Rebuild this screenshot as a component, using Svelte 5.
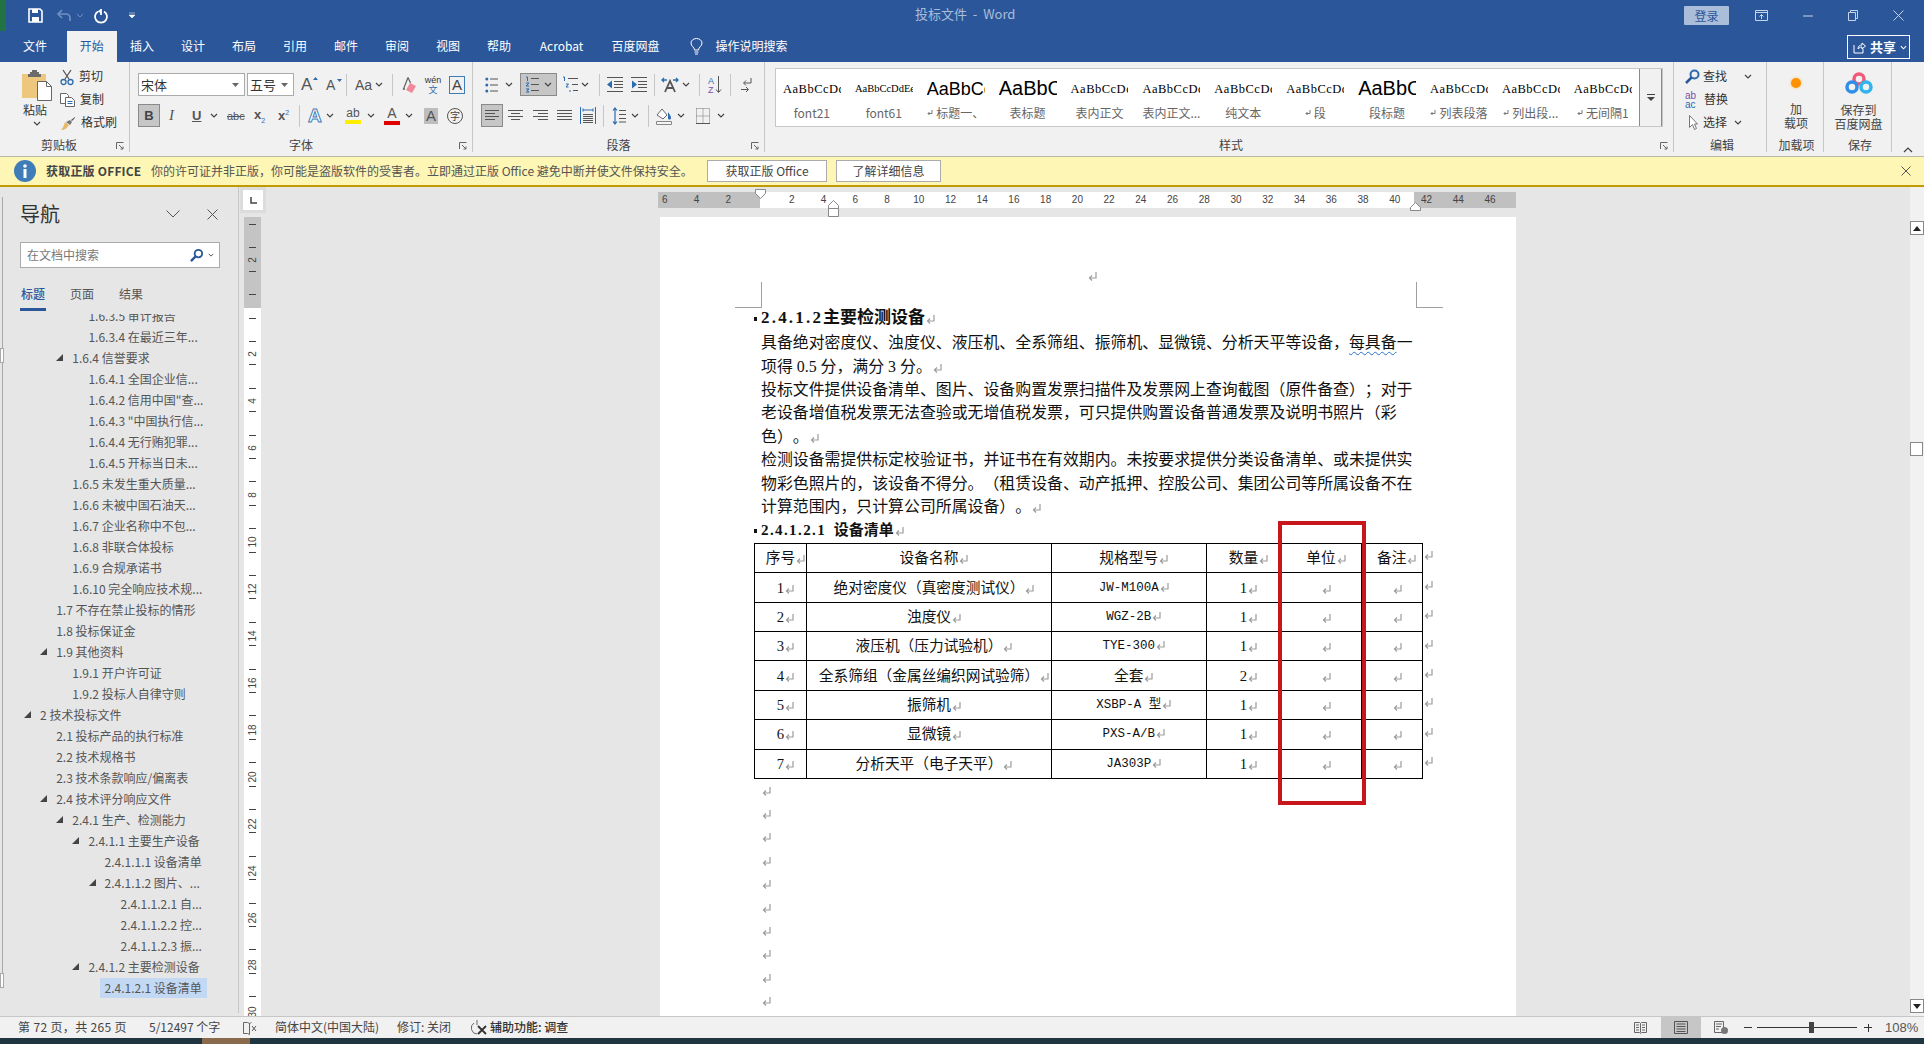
<script>
  const rows = [
    [4, 0, '1.6.3.5 审计报告'], [4, 0, '1.6.3.4 在最近三年...'], [3, 1, '1.6.4 信誉要求'],
    [4, 0, '1.6.4.1 全国企业信...'], [4, 0, '1.6.4.2 信用中国"查...'], [4, 0, '1.6.4.3 "中国执行信...'],
    [4, 0, '1.6.4.4 无行贿犯罪...'], [4, 0, '1.6.4.5 开标当日未...'], [3, 0, '1.6.5 未发生重大质量...'],
    [3, 0, '1.6.6 未被中国石油天...'], [3, 0, '1.6.7 企业名称中不包...'], [3, 0, '1.6.8 非联合体投标'],
    [3, 0, '1.6.9 合规承诺书'], [3, 0, '1.6.10 完全响应技术规...'], [2, 0, '1.7 不存在禁止投标的情形'],
    [2, 0, '1.8 投标保证金'], [2, 1, '1.9 其他资料'], [3, 0, '1.9.1 开户许可证'], [3, 0, '1.9.2 投标人自律守则'],
    [1, 1, '2 技术投标文件'], [2, 0, '2.1 投标产品的执行标准'], [2, 0, '2.2 技术规格书'],
    [2, 0, '2.3 技术条款响应/偏离表'], [2, 1, '2.4 技术评分响应文件'], [3, 1, '2.4.1 生产、检测能力'],
    [4, 1, '2.4.1.1 主要生产设备'], [5, 0, '2.4.1.1.1 设备清单'], [5, 1, '2.4.1.1.2 图片、...'],
    [6, 0, '2.4.1.1.2.1 自...'], [6, 0, '2.4.1.1.2.2 控...'], [6, 0, '2.4.1.1.2.3 振...'],
    [4, 1, '2.4.1.2 主要检测设备'], [5, 0, '2.4.1.2.1 设备清单']
  ];
  const styles = [
    ['AaBbCcDdEe', 'serif', 'font21', 0], ['AaBbCcDdEe', 'tiny', 'font61', 0], ['AaBbCcDd', 'big', '标题一、', 1],
    ['AaBbC', 'huge', '表标题', 0], ['AaBbCcDdEe', 'serif', '表内正文', 0], ['AaBbCcDdEe', 'serif', '表内正文...', 0],
    ['AaBbCcDdEe', 'serif', '纯文本', 0], ['AaBbCcDdEe', 'serif', '段', 1], ['AaBbC', 'huge', '段标题', 0],
    ['AaBbCcDdEe', 'serif', '列表段落', 1], ['AaBbCcDd', 'serif', '列出段...', 1], ['AaBbCcDd', 'serif', '无间隔1', 1]
  ];
  const table = [
    ['序号', '设备名称', '规格型号', '数量', '单位', '备注'],
    ['1', '绝对密度仪（真密度测试仪）', 'JW-M100A', '1', '', ''],
    ['2', '浊度仪', 'WGZ-2B', '1', '', ''],
    ['3', '液压机（压力试验机）', 'TYE-300', '1', '', ''],
    ['4', '全系筛组（金属丝编织网试验筛）', '全套', '2', '', ''],
    ['5', '振筛机', 'XSBP-A 型', '1', '', ''],
    ['6', '显微镜', 'PXS-A/B', '1', '', ''],
    ['7', '分析天平（电子天平）', 'JA303P', '1', '', '']
  ];
  const hnums = [6, 4, 2].map((n) => ({ n, x: 760 - 658 - n * 15.87 })).concat(
    Array.from({ length: 23 }, (_, i) => ({ n: (i + 1) * 2, x: 760 - 658 + (i + 1) * 2 * 15.87 }))
  );
  const vlabels = [{ n: 2, y: 260 }].concat(Array.from({ length: 15 }, (_, i) => ({ n: (i + 1) * 2, y: 354 + i * 47 })));
  const vticks = Array.from({ length: 34 }, (_, i) => 224 + i * 23.4);
  const marks = Array.from({ length: 10 }, (_, i) => i);
</script>

{#snippet ret()}
  <svg class="ret" width="9" height="10" viewBox="0 0 9 10"><path d="M8 1v6H1.500M4 4.500 1.500 7 4 9.500" fill="none" stroke="#9c9c9c" stroke-width="1.200"/></svg>
{/snippet}
{#snippet chev()}
  <svg class="chev" width="8" height="5" viewBox="0 0 8 5"><path d="M1 1l3 3 3-3" fill="none" stroke="#444" stroke-width="1.2"/></svg>
{/snippet}
{#snippet launcher()}
  <svg class="launch" width="8" height="8" viewBox="0 0 8 8"><path d="M.5 7V.5H7.5M3 3l4 4M4.5 7H7V4.5" fill="none" stroke="#666"/></svg>
{/snippet}

<div class="app">
  <div class="titlebar">
    <svg class="m28" width="15" height="15" viewBox="0 0 15 15"><path d="M1 1h11l2 2v11H1z" fill="none" stroke="#fff" stroke-width="1.6"/><path d="M4 1h6v4H4zM4 9h7v5H4z" fill="#fff"/></svg>
    <svg class="m14" width="15" height="14" viewBox="0 0 15 14"><path d="M5 1 1 5l4 4M1 5h8a4 4 0 0 1 4 4v3" fill="none" stroke="#6f8fbe" stroke-width="1.7"/></svg>
    <svg class="m4" width="8" height="5" viewBox="0 0 8 5"><path d="M1 1l3 3 3-3" fill="none" stroke="#6f8fbe"/></svg>
    <svg class="m10" width="14" height="15" viewBox="0 0 14 15"><path d="M4 3.500a6 6 0 1 0 6 0M7 1v6" fill="none" stroke="#fff" stroke-width="1.800"/><path d="M7 1 3.500 3.500 7 5z" fill="#fff"/></svg>
    <svg class="m21" width="6" height="7" viewBox="0 0 6 7"><path d="M0 1h6M0 3h6l-3 3z" fill="#fff" stroke="#fff" stroke-width=".5"/></svg>
    <div class="doc-title">投标文件  -  Word</div>
    <div class="signin">登录</div>
    <svg class="winb first" width="13" height="11" viewBox="0 0 13 11"><path d="M.5.5h12v10H.5zM.5 2.500h12M6.500 9V4.500M4.500 6.500l2-2 2 2" fill="none" stroke="#c6d4e8"/></svg>
    <svg class="winb" width="10" height="2" viewBox="0 0 10 2"><path d="M0 1h10" stroke="#c6d4e8"/></svg>
    <svg class="winb" width="10" height="11" viewBox="0 0 10 11"><path d="M.5 2.500h7v8h-7zM2.500 2.500v-2h7v8h-2" fill="none" stroke="#c6d4e8"/></svg>
    <svg class="winb" width="11" height="11" viewBox="0 0 11 11"><path d="M.5.5l10 10M10.500.5l-10 10" stroke="#c6d4e8"/></svg>
  </div>
  <div class="greenbar"></div>

  <div class="tabs">
    <div class="tab t-file">文件</div>
    <div class="tab active">开始</div>
    <div class="tab">插入</div><div class="tab">设计</div><div class="tab">布局</div><div class="tab">引用</div>
    <div class="tab">邮件</div><div class="tab">审阅</div><div class="tab">视图</div><div class="tab">帮助</div>
    <div class="tab t-wide">Acrobat</div><div class="tab t-wide">百度网盘</div>
    <svg class="bulb" width="13" height="17" viewBox="0 0 13 17"><path d="M4.500 12c0-3-3.500-3.500-3.500-7a5.500 4.500 0 0 1 11 0c0 3.500-3.500 4-3.500 7zM4.500 14h4M5 16h3" fill="none" stroke="#fff"/></svg>
    <div class="tab t-search">操作说明搜索</div>
    <div class="share">
      <svg width="13" height="13" viewBox="0 0 13 13"><path d="M1 4v8h9V8M5 8c0-3 2-4 4-4V2l3.500 3L9 8V6C7 6 6 7 5 8z" fill="none" stroke="#fff"/></svg>
      <b>共享</b>
      <svg width="7" height="5" viewBox="0 0 8 5"><path d="M1 1l3 3 3-3" fill="none" stroke="#fff" stroke-width="1.2"/></svg>
    </div>
  </div>

  <div class="ribbon">
    <section class="grp g-clip">
      <div class="clip-body">
        <div class="paste">
          <svg width="30" height="31" viewBox="0 0 30 31"><path d="M0 4h24v24H0z" fill="#eec77f"/><path d="M8 4V2h2V0h5v2h2v2h2v3H6V4z" fill="#6b6b6b"/><path d="M15.500 11.500h9l5 5v14h-14z" fill="#fff" stroke="#666"/><path d="M24.500 11.500v5h5" fill="none" stroke="#666"/></svg>
          <span class="pl">粘贴</span>
          {@render chev()}
        </div>
        <div class="clip-list">
          <div class="ci"><svg width="14" height="16" viewBox="0 0 14 16"><path d="M3 1l6 9M11 1l-6 9" stroke="#555" stroke-width="1.3"/><circle cx="3.500" cy="13" r="2.500" fill="none" stroke="#2b6cb0" stroke-width="1.300"/><circle cx="10.500" cy="13" r="2.500" fill="none" stroke="#2b6cb0" stroke-width="1.300"/></svg><span>剪切</span></div>
          <div class="ci"><svg width="15" height="14" viewBox="0 0 15 14"><path d="M.500.500h6l2 2v8h-8z" fill="#fff" stroke="#666"/><path d="M5.500 4.500h6l3 3v6h-9z" fill="#fff" stroke="#666"/><path d="M7.500 8.500h5M7.500 10.500h5" stroke="#2b6cb0"/></svg><span>复制</span></div>
          <div class="ci"><svg width="16" height="15" viewBox="0 0 16 15"><path d="M15 1l-4 3 1 1 3-3z" fill="#555"/><path d="M10 4l2 2-2 3-4-3z" fill="#777"/><path d="M5 6l4 3c-2 3-4 5-8 5 2-2 3-5 4-8z" fill="#e8b868"/></svg><span>格式刷</span></div>
        </div>
      </div>
      <div class="glabel">剪贴板</div>
      {@render launcher()}
    </section>

    <section class="grp g-font">
      <div class="rrow">
        <div class="combo fname">宋体<svg width="7" height="4" viewBox="0 0 7 4"><path d="M0 0h7L3.500 4z" fill="#666"/></svg></div>
        <div class="combo fsize m2">五号<svg width="7" height="4" viewBox="0 0 7 4"><path d="M0 0h7L3.500 4z" fill="#666"/></svg></div>
        <span class="ga m7">A<svg class="caret" width="5" height="3" viewBox="0 0 5 3"><path d="M0 3l2.500-3L5 3z" fill="#2b6cb0"/></svg></span>
        <span class="ga sm m11">A<svg class="caret" width="5" height="3" viewBox="0 0 5 3"><path d="M0 0l2.500 3L5 0z" fill="#2b6cb0"/></svg></span>
        <i class="sep m7"></i>
        <span class="aa m8">Aa</span><span class="m5 fx">{@render chev()}</span>
        <i class="sep m9"></i>
        <svg class="m8" width="16" height="18" viewBox="0 0 16 18"><path d="M7 1.500 2.500 13h1.500M7 1.500 9.500 7" fill="none" stroke="#666" stroke-width="1.300"/><path d="M9 7l6 3-4 7-6-3z" fill="#f08a9a"/></svg>
        <span class="wen m8"><span>wén</span><b>文</b></span>
        <span class="boxa m8">A</span>
      </div>
      <div class="rrow r2">
        <span class="pressed w22">B</span>
        <span class="gi it m9">I</span>
        <span class="gi un m15">U</span><span class="m10 fx">{@render chev()}</span>
        <span class="gi abc m9">abc</span>
        <span class="gi sub m10">x<sub>2</sub></span>
        <span class="gi sub m11">x<sup>2</sup></span>
        <i class="sep m8"></i>
        <span class="gi glow m8">A</span><span class="m4 fx">{@render chev()}</span>
        <span class="hl m11"><span>ab</span><i class="yb"></i></span><span class="m6 fx">{@render chev()}</span>
        <span class="fc m9">A<i class="rb"></i></span><span class="m5 fx">{@render chev()}</span>
        <span class="ab m11">A</span>
        <span class="zi m9">字</span>
      </div>
      <div class="glabel">字体</div>
      {@render launcher()}
    </section>

    <section class="grp g-para">
      <div class="rrow">
        <svg class="m12" width="13" height="16" viewBox="0 0 13 16"><circle cx="1.800" cy="2" r="1.500" fill="#2b6cb0"/><circle cx="1.800" cy="8" r="1.500" fill="#2b6cb0"/><circle cx="1.800" cy="14" r="1.500" fill="#2b6cb0"/><path d="M5 2h8M5 8h8M5 14h8" stroke="#555"/></svg>
        <span class="m7 fx">{@render chev()}</span>
        <span class="pressed numlist m7"><svg width="14" height="17" viewBox="0 0 14 17"><path d="M1 1h1.500v4M1 7h3l-3 3h3M1 13h3l-2 1.500 2 1.500H1" fill="none" stroke="#2b6cb0"/><path d="M6 2.500h8M6 8.500h8M6 14.500h8" stroke="#555"/></svg>{@render chev()}</span>
        <svg class="m5" width="16" height="17" viewBox="0 0 16 17"><path d="M1 1h1.500v4M4 8h2.500L4 11h2.500M8 14v2" fill="none" stroke="#2b6cb0"/><path d="M6 2.500h10M10 8.500h6M11 14.500h5" stroke="#555"/></svg>
        <span class="m3 fx">{@render chev()}</span>
        <i class="sep m10"></i>
        <svg class="m7" width="16" height="15" viewBox="0 0 16 15"><path d="M0 .500h16M7 4.500h9M7 7.500h9M7 10.500h9M0 14.500h16" stroke="#555"/><path d="M0 7.500l5-4v8z" fill="#2b6cb0"/></svg>
        <svg class="m8" width="16" height="15" viewBox="0 0 16 15"><path d="M0 .500h16M7 4.500h9M7 7.500h9M7 10.500h9M0 14.500h16" stroke="#555"/><path d="M6 7.500l-5-4v8z" fill="#2b6cb0"/></svg>
        <i class="sep m7"></i>
        <svg class="m7" width="16" height="17" viewBox="0 0 16 17"><path d="M0 4h5M11 4h5M2 2 0 4l2 2M14 2l2 2-2 2" fill="none" stroke="#2b6cb0" stroke-width="1.300"/><path d="M3 16 8 5l5 11M5 12h6" fill="none" stroke="#555" stroke-width="1.800"/></svg>
        <span class="m4 fx">{@render chev()}</span>
        <i class="sep m9"></i>
        <svg class="m8" width="14" height="19" viewBox="0 0 14 19"><text x="0" y="8.500" font-size="9" font-family="Liberation Sans" fill="#2b6cb0">A</text><text x="0" y="18" font-size="9" font-family="Liberation Sans" fill="#7a4fa8">Z</text><path d="M10.500 1v16M8 14.500l2.500 3 2.500-3" fill="none" stroke="#555"/></svg>
        <i class="sep m8"></i>
        <svg class="m10" width="11" height="15" viewBox="0 0 11 15"><path d="M10 1v5H3M5 3.500 2.500 6 5 8.500M0 12.500h7M5 10l2.500 2.500L5 15" fill="none" stroke="#555"/></svg>
      </div>
      <div class="rrow r2">
        <span class="pressed w22 m8"><svg width="14" height="11" viewBox="0 0 14 11"><path d="M0 .500h14M0 3.500h10M0 6.500h14M0 9.500h10" stroke="#555"/></svg></span>
        <svg class="m5" width="15" height="11" viewBox="0 0 15 11"><path d="M0 .500h15M3 3.500h9M0 6.500h15M3 9.500h9" stroke="#555"/></svg>
        <svg class="m10" width="15" height="11" viewBox="0 0 15 11"><path d="M0 .500h15M5 3.500h10M0 6.500h15M5 9.500h10" stroke="#555"/></svg>
        <svg class="m9" width="15" height="11" viewBox="0 0 15 11"><path d="M0 .500h15M0 3.500h15M0 6.500h15M0 9.500h15" stroke="#555"/></svg>
        <svg class="m8" width="16" height="17" viewBox="0 0 16 17"><path d="M.500 0v17M15.500 0v17" stroke="#2b6cb0"/><path d="M3 3h10M3 1.500v3M13 1.500v3" fill="none" stroke="#2b6cb0"/><path d="M3 7.500h10M3 9.500h10M3 11.500h10M3 13.500h10M3 15.500h10" stroke="#555"/></svg>
        <i class="sep m7"></i>
        <svg class="m8" width="14" height="18" viewBox="0 0 14 18"><path d="M3 1v16M1 3.500 3 1l2 2.500M1 14.500 3 17l2-2.500" fill="none" stroke="#2b6cb0" stroke-width="1.200"/><path d="M7 3.500h7M7 7.500h7M7 11.500h7M7 15h7" stroke="#555"/></svg>
        <span class="m5 fx">{@render chev()}</span>
        <i class="sep m9"></i>
        <svg class="m7" width="16" height="18" viewBox="0 0 16 18"><path d="M1 8l5-6 5 6-4 4z" fill="#fff" stroke="#666"/><path d="M12 5c2 3 3 4 3 6s-3 2-3 0z" fill="#2b6cb0"/><path d="M.500 14.500h15v3H.500z" fill="#f4f4f4" stroke="#888"/></svg>
        <span class="m5 fx">{@render chev()}</span>
        <svg class="m11" width="14" height="16" viewBox="0 0 14 16"><path d="M.500.500h13v15M7 .500v15M.500 8h13M.500.500v15" fill="none" stroke="#777" stroke-dasharray="1 1"/><path d="M0 15.500h14" stroke="#555"/></svg>
        <span class="m7 fx">{@render chev()}</span>
      </div>
      <div class="glabel">段落</div>
      {@render launcher()}
    </section>

    <section class="grp g-style">
      <div class="gallery">
        {#each styles as s}
          <div class="style">
            <div class="prev {s[1]}">{s[0]}</div>
            <div class="slabel">{#if s[3]}<svg width="6" height="7" viewBox="0 0 6 7"><path d="M5 0v3.500H1M2.500 2 1 3.500 2.500 5" fill="none" stroke="#777"/></svg>{/if}{s[2]}</div>
          </div>
        {/each}
        <div class="gmore"><svg width="8" height="7" viewBox="0 0 8 7"><path d="M0 0h8v1H0zM0 3h8L4 7z" fill="#444"/></svg></div>
      </div>
      <div class="glabel">样式</div>
      {@render launcher()}
    </section>

    <section class="grp g-edit">
      <div class="elist">
        <div class="ei"><svg width="15" height="15" viewBox="0 0 15 15"><circle cx="9.500" cy="5.500" r="4" fill="none" stroke="#2b6cb0" stroke-width="2"/><path d="M6.500 8.500 1 14" stroke="#2b579a" stroke-width="2.500"/></svg><span>查找</span><span class="m14 fx">{@render chev()}</span></div>
        <div class="ei"><svg width="16" height="17" viewBox="0 0 16 17"><text x="0" y="8" font-size="10" font-family="Liberation Sans" fill="#7a4fa8">ab</text><text x="0" y="16.500" font-size="10" font-family="Liberation Sans" fill="#2b6cb0">ac</text></svg><span>替换</span></div>
        <div class="ei"><svg class="cur" width="9" height="15" viewBox="0 0 9 15"><path d="M.500.500v12l3-3 2 5 2-1-2-4.500h3z" fill="#fff" stroke="#777"/></svg><span>选择</span><span class="m4 fx">{@render chev()}</span></div>
      </div>
      <div class="glabel">编辑</div>
    </section>

    <section class="grp g-add">
      <div class="addin"><i class="dot"></i><span>加<br />载项</span></div>
      <div class="glabel">加载项</div>
    </section>

    <section class="grp g-save">
      <div class="addin"><svg class="bd" width="28" height="22" viewBox="0 0 28 22"><circle cx="14" cy="7" r="5" fill="none" stroke="#f05a78" stroke-width="3.500"/><circle cx="7" cy="15" r="5" fill="none" stroke="#2f8fe8" stroke-width="3.500"/><circle cx="21" cy="15" r="5" fill="none" stroke="#2fb4ee" stroke-width="3.500"/></svg><span>保存到<br />百度网盘</span></div>
      <div class="glabel">保存</div>
    </section>

    <svg class="collapse" width="10" height="6" viewBox="0 0 10 6"><path d="M1 5l4-4 4 4" fill="none" stroke="#444" stroke-width="1.200"/></svg>
  </div>

  <div class="infobar">
    <svg class="m14" width="22" height="22" viewBox="0 0 22 22"><circle cx="11" cy="11" r="11" fill="#3f7db8"/><path d="M9.500 9h3v9h-3z" fill="#fff"/><circle cx="11" cy="6" r="1.800" fill="#fff"/></svg>
    <b class="ititle">获取正版 OFFICE</b>
    <span class="itext">你的许可证并非正版，你可能是盗版软件的受害者。立即通过正版 Office 避免中断并使文件保持安全。</span>
    <span class="ibtn b1">获取正版 Office</span>
    <span class="ibtn b2">了解详细信息</span>
    <svg class="iclose" width="10" height="10" viewBox="0 0 10 10"><path d="M.500.500l9 9M9.500.500l-9 9" stroke="#555"/></svg>
  </div>

  <div class="main">
    <aside class="nav">
      <div class="nav-head"><span class="nav-title">导航</span>
        <svg width="14" height="8" viewBox="0 0 14 8"><path d="M.500.500 7 7 13.500.500" fill="none" stroke="#555"/></svg>
        <svg class="nclose" width="11" height="11" viewBox="0 0 11 11"><path d="M.500.500l10 10M10.500.500l-10 10" stroke="#555"/></svg>
      </div>
      <div class="search"><span>在文档中搜索</span>
        <svg width="14" height="14" viewBox="0 0 15 15"><circle cx="9" cy="6" r="4" fill="none" stroke="#2b579a" stroke-width="2"/><path d="M6 9l-5 5" stroke="#2b579a" stroke-width="2.500"/></svg>
        <svg width="6" height="4" viewBox="0 0 8 5"><path d="M1 1l3 3 3-3" fill="none" stroke="#444" stroke-width="1.200"/></svg>
      </div>
      <div class="ntabs"><span class="on">标题</span><span>页面</span><span>结果</span></div>
      <div class="tree">
        <div class="tree-in">
          {#each rows as r, i}
            <div class="node" class:sel={i === rows.length - 1} style="padding-left:{24 + r[0] * 16.1}px">
              {#if r[1]}<svg class="tri" width="7" height="7" viewBox="0 0 7 7"><path d="M7 0v7H0z" fill="#444"/></svg>{/if}
              <span>{r[2]}</span>
            </div>
          {/each}
        </div>
      </div>
    </aside>

    <div class="vr">
      <div class="corner"><svg width="7" height="7" viewBox="0 0 7 7"><path d="M1 0v6h6" fill="none" stroke="#444" stroke-width="1.500"/></svg></div>
      <div class="vtrack">
        <div class="vgray"></div>
        {#each vticks as y}<i class="vtick" style="top:{y - 217}px"></i>{/each}
        {#each vlabels as l}<span class="vnum" style="top:{l.y - 217}px">{l.n}</span>{/each}
      </div>
    </div>

    <div class="docarea">
      <div class="hruler">
        <div class="hg l"></div><div class="hw"></div><div class="hg r"></div>
        {#each hnums as h}<span class="hnum" style="left:{h.x}px">{h.n}</span>{/each}
        <svg class="mk m-top" width="11" height="10" viewBox="0 0 11 10"><path d="M.500.500h10v4L5.500 9.500.500 4.500z" fill="#fff" stroke="#888"/></svg>
        <svg class="mk m-hang" width="11" height="17" viewBox="0 0 11 17"><path d="M.500 8.500v-3l5-5 5 5v3zM.500 8.500h10v8H.500z" fill="#fff" stroke="#888"/></svg>
        <svg class="mk m-right" width="11" height="9" viewBox="0 0 11 9"><path d="M.500 8.500v-3l5-5 5 5v3z" fill="#fff" stroke="#888"/></svg>
      </div>
      <article class="page">
        <i class="crop cl"></i><i class="crop cr"></i>
        <div class="hdr">{@render ret()}</div>
        <div class="h1"><i class="bul"></i><span class="num">2.4.1.2</span>主要检测设备{@render ret()}</div>
        <div class="body">
          <div class="ln">具备绝对密度仪、浊度仪、液压机、全系筛组、振筛机、显微镜、分析天平等设备，<span class="wavy">每具备</span>一</div>
          <div class="ln">项得 0.5 分，满分 3 分。{@render ret()}</div>
          <div class="ln">投标文件提供设备清单、图片、设备购置发票扫描件及发票网上查询截图（原件备查）；对于</div>
          <div class="ln">老设备增值税发票无法查验或无增值税发票，可只提供购置设备普通发票及说明书照片（彩</div>
          <div class="ln">色）。{@render ret()}</div>
          <div class="ln">检测设备需提供标定校验证书，并证书在有效期内。未按要求提供分类设备清单、或未提供实</div>
          <div class="ln">物彩色照片的，该设备不得分。（租赁设备、动产抵押、控股公司、集团公司等所属设备不在</div>
          <div class="ln">计算范围内，只计算公司所属设备）。{@render ret()}</div>
        </div>
        <div class="h2"><i class="bul"></i><span class="num2">2.4.1.2.1</span> 设备清单{@render ret()}</div>
        <div class="twrap">
          <table>
            <colgroup><col class="c1" /><col class="c2" /><col class="c3" /><col class="c4" /><col class="c5" /><col class="c6" /><col class="c7" /></colgroup>
            <tbody>
              {#each table as row, ri}
                <tr>
                  {#each row as c, ci}
                    <td class:mono={ci === 2 && ri > 0 && c !== '全套'}>{c}{@render ret()}</td>
                  {/each}
                  <td class="end">{@render ret()}</td>
                </tr>
              {/each}
            </tbody>
          </table>
          <div class="redbox"></div>
        </div>
        <div class="trail">{#each marks as m}<div class="ln" data-i={m}>{@render ret()}</div>{/each}</div>
      </article>
    </div>

    <div class="vscroll">
      <span class="sb up"><svg width="8" height="5" viewBox="0 0 8 5"><path d="M0 5l4-5 4 5z" fill="#222"/></svg></span>
      <span class="thumb"></span>
      <span class="sb down"><svg width="8" height="5" viewBox="0 0 8 5"><path d="M0 0l4 5 4-5z" fill="#222"/></svg></span>
    </div>
    <div class="sliver"><i class="b1st"></i><i class="b2nd"></i></div>
  </div>

  <div class="status">
    <span class="s1">第 72 页，共 265 页</span>
    <span class="s2">5/12497 个字</span>
    <svg class="s3" width="14" height="14" viewBox="0 0 14 14"><path d="M.500 1.500h4l2 1v11l-2-1h-4zM6.500 2.500l2-1" fill="none" stroke="#666"/><path d="M9 5l4 5M13 5l-4 5" stroke="#555"/></svg>
    <span class="s4">简体中文(中国大陆)</span>
    <span class="s5">修订: 关闭</span>
    <svg class="s6" width="17" height="17" viewBox="0 0 17 17"><path d="M6 1v5M3 4a6 6 0 0 0 3 11" fill="none" stroke="#666"/><path d="M7 7l8 8M15 7l-8 8" stroke="#333" stroke-width="1.800"/></svg>
    <b class="s7">辅助功能: 调查</b>
    <div class="sright">
      <svg width="13" height="12" viewBox="0 0 13 12"><path d="M.500.500h5l1 1 1-1h5v10h-5l-1 1-1-1h-5zM6.500 1.500v9M2 3h3M2 5.500h3M2 8h3M8 3h3M8 5.500h3M8 8h3" fill="none" stroke="#666"/></svg>
      <span class="sact"><svg width="14" height="13" viewBox="0 0 14 13"><path d="M.500.500h13v12H.500zM2.500 3h9M2.500 5.500h9M2.500 8h9M2.500 10.500h9" fill="none" stroke="#555"/></svg></span>
      <svg width="14" height="13" viewBox="0 0 14 13"><path d="M.500.500h9v11H.500zM2 3h6M2 5.500h5M2 8h3" fill="none" stroke="#666"/><circle cx="10.500" cy="9.500" r="3.500" fill="#777"/></svg>
      <span class="minus"></span>
      <div class="slider"><i></i></div>
      <span class="plus"></span>
      <span class="zoom">108%</span>
    </div>
  </div>
  <div class="taskbar"><i></i></div>
</div>

<style>
  :global(body) { margin: 0; background: #e6e6e6; }
  .app { position: relative; width: 1924px; height: 1044px; overflow: hidden; font: 12px/1.2 "Noto Sans CJK SC", "Liberation Sans", sans-serif; color: #333; }
  svg { display: block; flex: none; overflow: visible; }
  i { display: block; flex: none; }
  .fx { display: flex; flex: none; }
  .m2 { margin-left: 2px; } .m3 { margin-left: 3px; } .m4 { margin-left: 4px; } .m5 { margin-left: 5px; } .m6 { margin-left: 6px; }
  .m7 { margin-left: 7px; } .m8 { margin-left: 8px; } .m9 { margin-left: 9px; } .m10 { margin-left: 10px; }
  .m11 { margin-left: 11px; } .m12 { margin-left: 12px; } .m14 { margin-left: 14px; } .m15 { margin-left: 15px; }
  .m21 { margin-left: 21px; } .m28 { margin-left: 28px; }

  .titlebar { height: 31px; background: #2b579a; display: flex; align-items: center; position: relative; }
  .greenbar { position: absolute; left: 0; top: 0; width: 6px; height: 62px; background: #217346; }
  .doc-title { position: absolute; left: 915px; top: 6px; color: #a9bdd8; font-size: 13px; white-space: pre; }
  .signin { margin-left: auto; width: 45px; height: 19px; line-height: 19px; text-align: center; background: #aabeda; color: #2b579a; border-radius: 1px; }
  .winb { margin-left: 35px; }
  .winb.first { margin-left: 26px; }
  .titlebar .winb:last-child { margin-right: 20px; }

  .tabs { height: 31px; background: #2b579a; display: flex; padding-left: 10px; position: relative; }
  .tab { width: 51px; height: 31px; line-height: 30px; text-align: center; color: #fff; flex: none; }
  .t-file { width: 50px; margin-right: 7px; }
  .tab.active { width: 49.500px; background: #f1f1f1; color: #2b579a; }
  .t-wide { width: 74px; }
  .t-search { width: 80px; margin-left: 9px; }
  .bulb { margin: 7px 0 0 17px; }
  .share { position: absolute; left: 1847px; top: 4px; width: 63px; height: 24px; box-sizing: border-box; border: 1px solid #fff; color: #fff; display: flex; align-items: center; gap: 4px; padding-left: 5px; font-size: 13px; }

  .ribbon { height: 94px; box-sizing: border-box; background: #f1f1f1; display: flex; padding-left: 5px; position: relative; }
  .grp { position: relative; height: 90px; flex: none; border-right: 1px solid #c6c6c6; box-sizing: border-box; }
  .glabel { position: absolute; left: 0; right: 0; bottom: -2px; height: 18px; line-height: 18px; text-align: center; color: #444; white-space: nowrap; }
  .launch { position: absolute; right: 5px; bottom: 2px; }
  .g-clip { width: 125px; padding-top: 8px; }
  .g-font { width: 343px; }
  .g-para { width: 292px; }
  .g-style { width: 909px; }
  .g-edit { width: 93px; }
  .g-add { width: 57px; }
  .g-save { width: 68px; }
  .g-clip .glabel { right: 16px; }
  .clip-body { display: flex; padding-left: 17px; }
  .paste { width: 30px; display: flex; flex-direction: column; align-items: center; }
  .pl { margin: 2px 0 4px -4px; color: #333; white-space: nowrap; }
  .clip-list { margin-left: 8px; display: flex; flex-direction: column; gap: 6px; margin-top: -2px; }
  .ci { height: 17px; display: flex; align-items: center; gap: 5px; white-space: nowrap; }
  .ci svg { margin-top: 1px; }

  .rrow { display: flex; align-items: center; height: 23px; padding-top: 11px; white-space: nowrap; }
  .r2 { padding-top: 8px; }
  .g-font .rrow { padding-left: 8px; }
  .sep { width: 1px; height: 22px; background: #c6c6c6; }
  .combo { box-sizing: border-box; height: 23px; background: #fff; border: 1px solid #ababab; display: flex; align-items: center; justify-content: space-between; padding: 0 5px 0 2px; font-size: 13px; }
  .fname { width: 107px; }
  .fsize { width: 47px; }
  .ga { position: relative; width: 14px; font: 17px "Liberation Sans", sans-serif; color: #555; }
  .ga.sm { font-size: 14px; width: 13px; }
  .caret { position: absolute; right: -3px; top: 2px; }
  .aa { width: 15px; font: 14px "Liberation Sans", sans-serif; color: #555; }
  .wen { width: 16px; display: flex; flex-direction: column; align-items: center; font: 9px/9px "Liberation Sans", sans-serif; color: #333; }
  .wen b { color: #2b6cb0; font: 9px/9px "Noto Sans CJK SC", sans-serif; }
  .boxa { width: 16px; height: 18px; box-sizing: border-box; border: 1px solid #3f7db8; font: 15px/16px "Liberation Sans", sans-serif; text-align: center; color: #444; }
  .pressed { display: flex; align-items: center; justify-content: center; box-sizing: border-box; height: 23px; background: #c6c6c6; border: 1px solid #8a8a8a; font: bold 13px "Liberation Sans", sans-serif; color: #444; flex: none; }
  .w22 { width: 22px; }
  .numlist { width: 37px; gap: 5px; }
  .gi { font: 14px "Liberation Sans", sans-serif; color: #555; }
  .it { font-style: italic; font-family: "Liberation Serif", serif; width: 8px; font-size: 15px; }
  .un { text-decoration: underline; width: 8px; font-weight: bold; font-size: 13px; }
  .abc { width: 17px; font-size: 11px; text-decoration: line-through; }
  .sub { width: 13px; font-weight: bold; font-size: 13px; }
  .sub sub, .sub sup { font-size: 7px; color: #2b6cb0; font-weight: normal; }
  .glow { width: 14px; font-size: 19px; font-weight: bold; color: #fff; -webkit-text-stroke: 1px #3f7db8; }
  .hl { width: 16px; display: flex; flex-direction: column; font: 12px/13px "Liberation Sans", sans-serif; color: #555; text-align: center; }
  .yb { height: 4px; background: #ffee00; }
  .fc { width: 16px; font: 14px/15px "Liberation Sans", sans-serif; color: #555; text-align: center; }
  .rb { height: 4px; background: #e00000; }
  .ab { width: 14px; height: 16px; background: #bdbdbd; font: 15px/16px "Liberation Sans", sans-serif; color: #555; text-align: center; }
  .zi { width: 14px; height: 14px; border: 1px solid #555; border-radius: 50%; font-size: 10px; line-height: 14px; text-align: center; color: #444; }

  .gallery { position: absolute; left: 10px; top: 6px; width: 888px; height: 59px; display: flex; box-sizing: border-box; background: #fff; border: 1px solid #c6c6c6; overflow: hidden; }
  .style { width: 71.900px; flex: none; text-align: center; overflow: hidden; padding: 0 7px; box-sizing: border-box; }
  .prev { height: 30px; margin-top: 5px; white-space: nowrap; overflow: hidden; font: 12.500px/30px "Liberation Serif", serif; letter-spacing: .5px; color: #000; text-align: left; }
  .prev.tiny { font-size: 10.500px; letter-spacing: 0; }
  .prev.big { font: 18px/30px "Liberation Sans", sans-serif; letter-spacing: 0; }
  .prev.huge { font: 20px/28px "Liberation Sans", sans-serif; letter-spacing: 0; text-align: center; }
  .slabel { display: flex; align-items: center; justify-content: center; gap: 3px; color: #666; white-space: nowrap; height: 18px; }
  .gmore { position: absolute; right: 0; top: -1px; width: 23px; height: 59px; box-sizing: border-box; border: 1px solid #8a8a8a; background: #f1f1f1; display: flex; align-items: center; justify-content: center; }
  .g-style .glabel { left: 430px; right: auto; width: 72px; }
  .g-edit { padding: 6px 0 0 11px; }
  .g-edit .glabel { left: 4px; }
  .g-add .glabel { left: 3px; }
  .g-save .glabel { left: 5px; }
  .elist { display: flex; flex-direction: column; gap: 6px; }
  .ei { height: 17px; display: flex; align-items: center; gap: 3px; white-space: nowrap; }
  .ei .cur { margin: 0 2px 0 4px; }
  .addin { display: flex; flex-direction: column; align-items: center; text-align: center; line-height: 14px; color: #444; padding-left: 2px; }
  .dot { width: 10px; height: 10px; border-radius: 50%; margin: 16px 0 14px; background: #ff9000; box-shadow: 0 0 3px #ffc070; }
  .bd { margin: 10px 0 9px; }
  .collapse { position: absolute; left: 1903px; top: 85px; }

  .infobar { height: 28px; background: #fdf6b4; border-top: 1px solid #bdb9a0; border-bottom: 2px solid #c09a00; margin-top: 0; box-sizing: content-box; display: flex; align-items: center; position: relative; white-space: nowrap; }
  .ititle { margin-left: 10px; width: 105px; color: #444; letter-spacing: .2px; }
  .itext { width: 556px; color: #555; }
  .ibtn { height: 22px; box-sizing: border-box; background: #fff; border: 1px solid #ababab; line-height: 20px; text-align: center; color: #444; }
  .b1 { width: 120px; }
  .b2 { width: 105px; margin-left: 9px; }
  .iclose { position: absolute; left: 1901px; top: 9px; }

  .main { height: 829px; display: flex; position: relative; background: #e6e6e6; }
  .nav { width: 238px; flex: none; border-right: 1px solid #c6c6c6; height: 826px; }
  .nav-head { display: flex; align-items: center; padding: 6px 0 0 20px; box-sizing: border-box; height: 48px; }
  .nav-title { font-size: 20px; width: 146px; color: #333; }
  .nclose { margin-left: 27px; }
  .search { margin: 7px 0 0 20px; width: 200px; height: 26px; box-sizing: border-box; background: #fff; border: 1px solid #ababab; display: flex; align-items: center; padding-left: 6px; color: #777; }
  .search span { flex: 1; }
  .search svg:last-child { margin: 0 5px 0 4px; }
  .ntabs { display: flex; margin: 19px 0 0 21px; gap: 25px; height: 24px; position: relative; color: #555; }
  .ntabs .on { color: #2b579a; font-weight: 500; }
  .ntabs .on::after { content: ""; position: absolute; left: -1px; top: 21px; width: 26px; height: 3px; background: #2b579a; }
  .tree { position: absolute; left: 0; top: 127px; width: 238px; height: 684px; overflow: hidden; color: #555; }
  .tree-in { margin-top: -9px; }
  .node { height: 21px; line-height: 21px; position: relative; white-space: nowrap; }
  .node span { padding: 0 5px; margin-left: -5px; display: inline-block; height: 20px; line-height: 20px; }
  .node.sel span { background: #c3d9f3; }
  .tri { position: absolute; margin-left: -16px; top: 7px; }

  .vr { width: 29px; flex: none; position: relative; }
  .corner { width: 20px; height: 20px; margin: 3px 0 0 4px; background: #fff; box-shadow: 0 0 0 3px #dcdcdc; display: flex; align-items: center; justify-content: center; }
  .vtrack { position: absolute; left: 5px; top: 30px; width: 17px; height: 799px; background: #fff; overflow: hidden; }
  .vgray { height: 91px; background: #c4c4c4; }
  .vtick { position: absolute; left: 5px; width: 7px; height: 1px; background: #444; }
  .vnum { position: absolute; left: 0; width: 17px; text-align: center; font: 10px/10px "Liberation Sans", sans-serif; transform: translateY(-5px) rotate(-90deg); color: #444; }

  .docarea { flex: none; width: 1642px; }
  .hruler { margin: 5px 0 0 390px; width: 858px; height: 16px; position: relative; display: flex; }
  .hg { background: #c0c0c0; }
  .hg.l { width: 102px; }
  .hw { width: 654px; background: #fff; }
  .hg.r { width: 102px; }
  .hnum { position: absolute; top: 1px; width: 16px; margin-left: -8px; text-align: center; font: 10px/14px "Liberation Sans", sans-serif; color: #444; }
  .mk { position: absolute; }
  .m-top { left: 97px; top: -3px; }
  .m-hang { left: 170px; top: 8px; }
  .m-right { left: 752px; top: 10px; }

  .page { position: relative; margin: 9px 0 0 392px; width: 856px; height: 799px; background: #fff; padding-top: 46px; box-sizing: border-box; font: 15.900px/23.400px "Liberation Serif", "Noto Sans CJK SC", serif; color: #111; overflow: hidden; text-spacing-trim: space-all; }
  .page :global(.ret) { display: inline-block; margin-left: 1px; vertical-align: -1px; }
  .crop { position: absolute; top: 65px; width: 26px; height: 25px; }
  .cl { left: 75px; border-right: 1px solid #a0a0a0; border-bottom: 1px solid #a0a0a0; }
  .cr { left: 756px; border-left: 1px solid #a0a0a0; border-bottom: 1px solid #a0a0a0; }
  .hdr { height: 24px; text-align: center; padding-left: 8px; line-height: 24px; }
  .h1 { margin: 19px 0 0 101px; height: 24px; line-height: 24px; font-size: 17px; font-weight: bold; position: relative; white-space: nowrap; }
  .num { letter-spacing: 2.200px; display: inline-block; width: 62px; }
  .bul { position: absolute; left: -7px; top: 11px; width: 3px; height: 4px; background: #111; }
  .body { margin: 1.300px 0 0 101px; }
  .ln { height: 23.400px; white-space: nowrap; }
  .wavy { text-decoration: underline wavy #2f6fd0 1px; text-underline-offset: 3px; }
  .h2 { margin: 0 0 0 101px; height: 24.500px; line-height: 25px; font-size: 15px; font-weight: bold; position: relative; white-space: nowrap; }
  .h2 .bul { top: 11px; }
  .num2 { letter-spacing: 1.400px; display: inline-block; width: 69px; }
  .twrap { position: relative; margin-left: 94px; width: 689px; }
  table { border-collapse: collapse; table-layout: fixed; width: 689px; font-size: 14.700px; line-height: 18px; }
  .c1 { width: 52px; } .c2 { width: 245px; } .c3 { width: 154.500px; } .c4 { width: 75px; } .c5 { width: 80px; } .c6 { width: 61.500px; } .c7 { width: 21px; }
  tr { height: 29.400px; }
  td { border: 1px solid #000; padding: 0 0 0 10px; text-align: center; white-space: nowrap; overflow: hidden; }
  td.mono { font-family: "Liberation Mono", "Noto Sans CJK SC", monospace; font-size: 12.500px; }
  td.end { border: 0; text-align: left; padding: 2px 0 0 0; vertical-align: top; }
  .redbox { position: absolute; left: 524px; top: -22px; width: 88px; height: 284px; box-sizing: border-box; border: 4px solid #c8161d; }
  .trail { margin: -1.500px 0 0 101px; }

  .vscroll { width: 14px; flex: none; background: #f1f1f1; position: relative; }
  .sb { position: absolute; left: 0; width: 14px; height: 14px; box-sizing: border-box; border: 1px solid #888; background: #fff; display: flex; align-items: center; justify-content: center; }
  .up { top: 34px; }
  .down { top: 812px; }
  .thumb { position: absolute; left: 0; top: 255px; width: 13px; height: 14px; box-sizing: border-box; background: #fff; border: 1px solid #888; }
  .sliver { position: absolute; left: 0; top: 10px; width: 2px; height: 790px; border-right: 1px solid #a8a8a8; }
  .sliver i { position: absolute; left: 0; width: 2px; height: 13px; background: #fff; border: 1px solid #a8a8a8; }
  .b1st { top: 151px; }
  .b2nd { top: 776px; }

  .status { height: 22px; background: #f1f1f1; border-top: 1px solid #c6c6c6; box-sizing: border-box; display: flex; align-items: center; position: relative; color: #444; white-space: nowrap; }
  .s1 { margin-left: 18px; width: 131px; letter-spacing: .35px; }
  .s2 { width: 94px; }
  .s3 { margin-right: 18px; }
  .s4 { width: 122px; }
  .s5 { width: 74px; }
  .s6 { margin-right: 2px; }
  .s7 { font-weight: 500; color: #333; }
  .sright { position: absolute; left: 1634px; top: 0; height: 21px; display: flex; align-items: center; }
  .sact { margin-left: 14px; width: 40px; height: 21px; background: #c6c6c6; display: flex; align-items: center; justify-content: center; }
  .sact + svg { margin-left: 13px; }
  .minus { width: 8px; height: 1px; background: #333; margin-left: 16px; }
  .slider { width: 100px; height: 1px; background: #333; margin-left: 5px; position: relative; }
  .slider i { position: absolute; left: 52px; top: -5px; width: 5px; height: 11px; background: #444; }
  .plus { position: relative; width: 8px; height: 1px; background: #333; margin-left: 7px; }
  .plus::after { content: ""; position: absolute; left: 3.500px; top: -3.500px; width: 1px; height: 8px; background: #333; }
  .zoom { margin-left: 13px; font: 13px "Liberation Sans", sans-serif; color: #555; }
  .taskbar { height: 6px; background: #1f3640; position: relative; }
  .taskbar i { position: absolute; left: 202px; width: 48px; height: 6px; background: #8a6a4c; }
</style>
